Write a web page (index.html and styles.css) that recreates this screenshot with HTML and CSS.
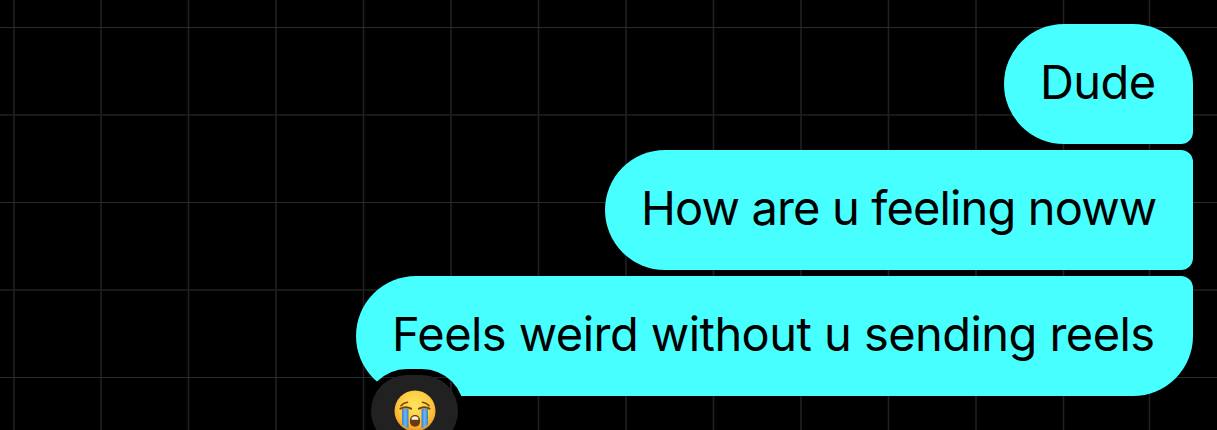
FILE: index.html
```html
<!DOCTYPE html>
<html lang="en">
<head>
    <meta charset="UTF-8">
    <meta name="viewport" content="width=device-width, initial-scale=1.0">
    <title>Chat</title>
    <link rel="stylesheet" href="styles.css">
</head>
<body>
    <div class="chat">
        <!-- Wallpaper grid -->
        <svg class="wallpaper" viewBox="0 0 1217 430" aria-hidden="true">
            <path class="grid-line" d="M14 0V430M101 0V430M188.5 0V430M276 0V430M363.5 0V430M451 0V430M538.5 0V430M626 0V430M713.5 0V430M801 0V430M888.5 0V430M976 0V430M1063.5 0V430M1149.5 0V430"/>
            <path class="grid-line" d="M0 115H1217M0 290H1217"/>
            <path class="grid-line thin" d="M0 27.5H1217M0 202.5H1217M0 377.5H1217"/>
        </svg>

        <div class="messages">
            <div class="bubble first"><span>Dude</span></div>
            <div class="bubble middle"><span>How are u feeling noww</span></div>
            <div class="bubble last">
                <span>Feels weird without u sending reels</span>
                <div class="reaction">
                    <svg class="emoji" viewBox="0 0 42 42" role="img" aria-label="Loudly crying face">
                        <defs>
                            <radialGradient id="face" cx="50%" cy="38%" r="62%">
                                <stop offset="0" stop-color="#ffe45c"/>
                                <stop offset="0.55" stop-color="#fecf45"/>
                                <stop offset="0.85" stop-color="#f8b02c"/>
                                <stop offset="1" stop-color="#e78b16"/>
                            </radialGradient>
                            <linearGradient id="tear" x1="0" x2="1" y1="0" y2="0">
                                <stop offset="0" stop-color="#3482cd"/>
                                <stop offset="0.5" stop-color="#71b4ec"/>
                                <stop offset="1" stop-color="#3482cd"/>
                            </linearGradient>
                        </defs>
                        <circle cx="21" cy="21" r="20.5" fill="url(#face)"/>
                        <path d="M8 19.5Q11 18 14.5 19V38.5Q11 37 8 34.5Z" fill="url(#tear)"/>
                        <path d="M27.5 19Q31 18 34 19.5V34.5Q31 37 27.5 38.5Z" fill="url(#tear)"/>
                        <path class="brow" d="M7 15.7Q9.5 12.7 13.5 12.2M28.5 12.2Q32.5 12.7 35 15.7"/>
                        <path class="eye" d="M6.5 18.7Q12 15.8 17 18.7M25 18.7Q30 15.8 35.5 18.7"/>
                        <path d="M21 25C24.4 25 26.1 27.4 26.1 31C26.1 34.8 24.4 36.7 21 36.7S15.9 34.8 15.9 31C15.9 27.4 17.6 25 21 25Z" fill="#6b3a12"/>
                        <path d="M17.6 28Q18.5 26.2 21 26.2T24.4 28V29.8H17.6Z" fill="#fff5df"/>
                    </svg>
                </div>
            </div>
        </div>
    </div>
</body>
</html>
```
FILE: styles.css
```css
:root {
    --bubble-color: #48ffff;
    --grid-color: #202022;
    --reaction-color: #212121;
}

body {
    margin: 0;
    background-color: #000;
    font-family: Inter, 'Liberation Sans', sans-serif;
}

.chat {
    position: relative;
    height: 430px;
    overflow: hidden;
}

.wallpaper {
    position: absolute;
    inset: 0;
    width: 1217px;
    height: 430px;
}

.grid-line {
    stroke: var(--grid-color);
    stroke-width: 1.6;
    fill: none;
}

.grid-line.thin {
    stroke: #2b2b2d;
    stroke-width: 1;
}

.messages {
    position: relative;
    display: flex;
    flex-direction: column;
    align-items: flex-end;
    gap: 6px;
    padding: 24px 24px 0 0;
}

.bubble {
    position: relative;
    box-sizing: border-box;
    height: 120px;
    padding: 0 36px;
    border-radius: 60px 12px 12px 60px;
    background-color: var(--bubble-color);
    color: #000;
    font-size: 47px;
    line-height: 115px;
    white-space: nowrap;
}

.bubble.first {
    width: 189px;
    border-top-right-radius: 60px;
    letter-spacing: -0.6px;
}

.bubble.middle {
    width: 588px;
    letter-spacing: -0.86px;
}

.bubble.last {
    width: 837px;
    border-bottom-right-radius: 60px;
    letter-spacing: -0.55px;
}

.reaction {
    position: absolute;
    left: 9px;
    top: 93px;
    display: flex;
    justify-content: center;
    box-sizing: border-box;
    width: 99px;
    height: 84px;
    padding-top: 15px;
    border: 6px solid transparent;
    border-radius: 42px;
    background:
        linear-gradient(var(--reaction-color), var(--reaction-color)) padding-box,
        linear-gradient(transparent 8px, #242426 8px, #242426 9px, transparent 9px) border-box,
        linear-gradient(90deg, transparent 85px, var(--grid-color) 85px, var(--grid-color) 87px, transparent 87px) border-box,
        linear-gradient(#000, #000) border-box;
}

.emoji {
    width: 42px;
    height: 42px;
}

.brow,
.eye {
    fill: none;
    stroke: #70400e;
    stroke-width: 1.6;
    stroke-linecap: round;
}

.eye {
    stroke-width: 2;
}
```
